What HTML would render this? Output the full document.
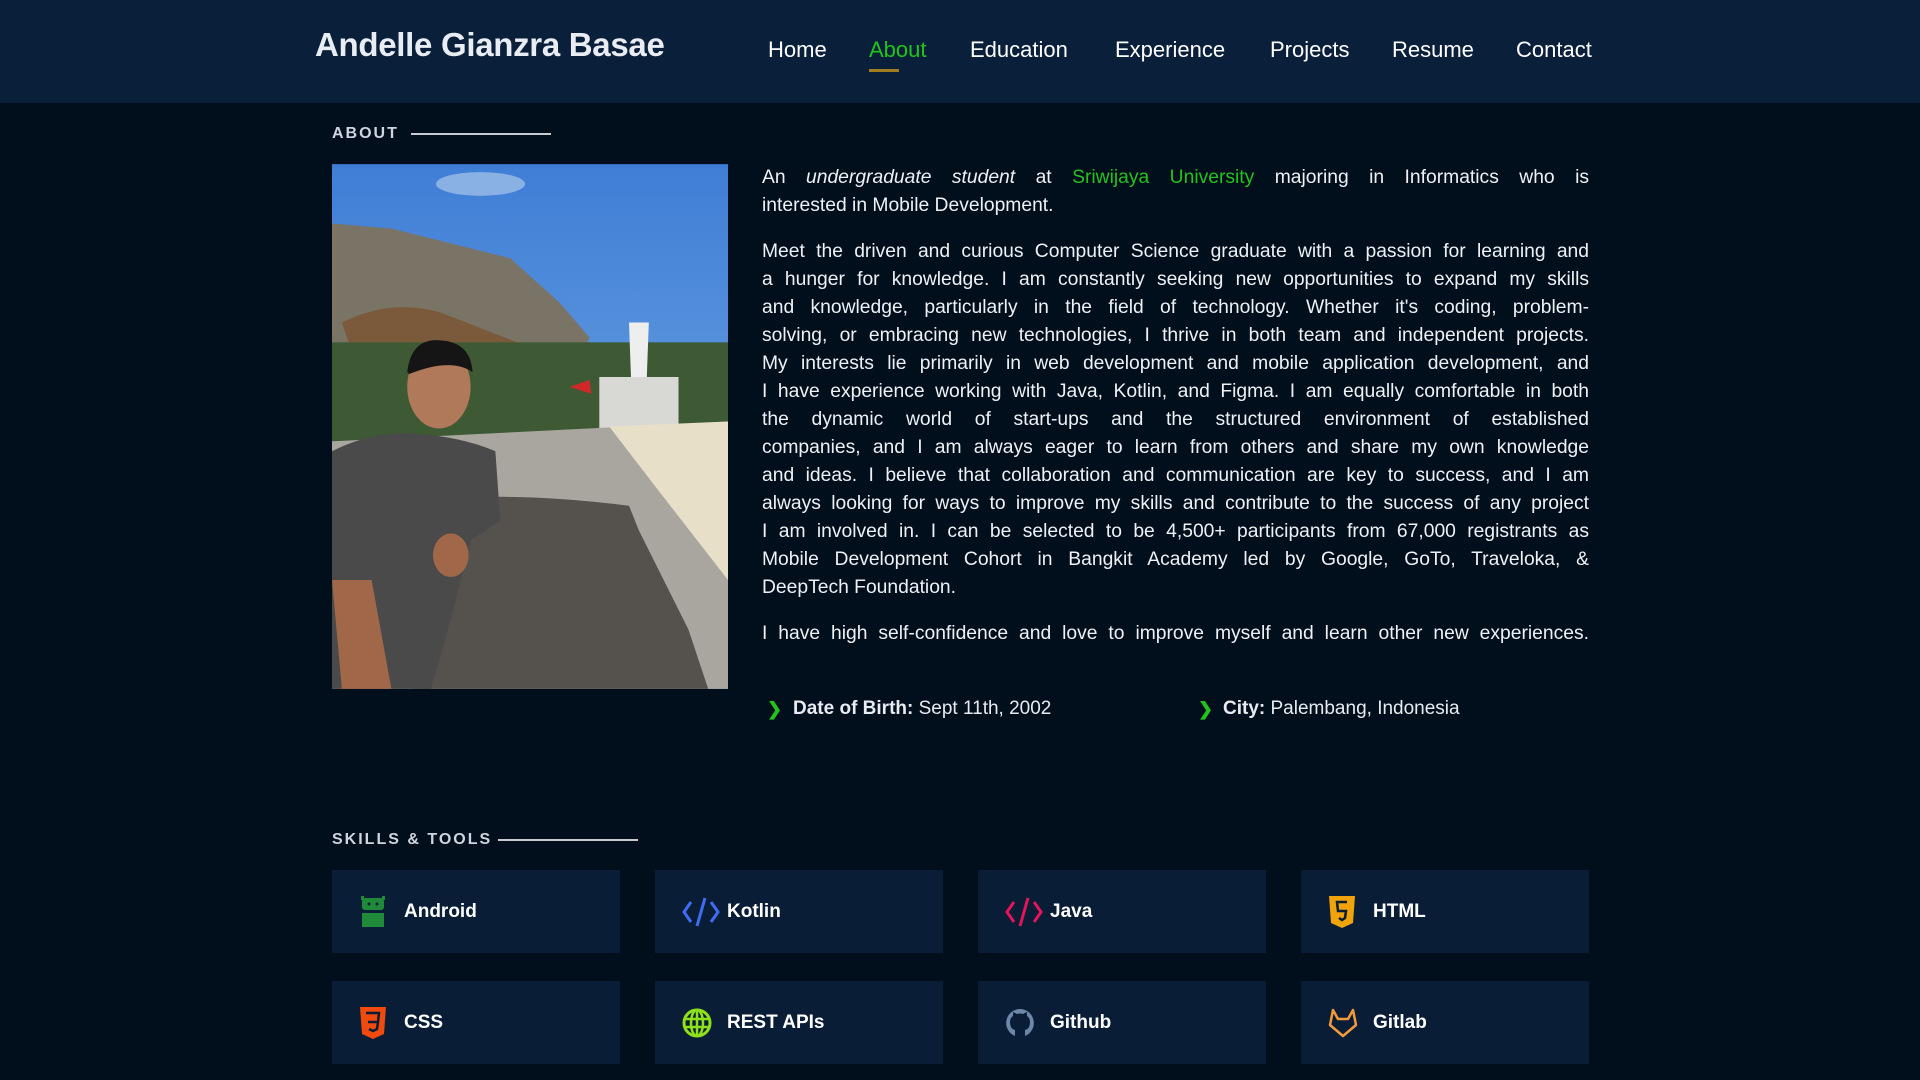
<!DOCTYPE html>
<html><head><meta charset="utf-8"><style>
*{margin:0;padding:0;box-sizing:border-box}
body{width:1920px;height:1080px;background:#010e1b;font-family:"Liberation Sans",sans-serif;color:#e8ecf2;position:relative;overflow:hidden}
.hdr{position:absolute;left:0;top:0;width:1920px;height:103px;background:#0a1f3a}
.name{position:absolute;left:315px;top:26px;font-size:33px;font-weight:bold;color:#e9edf3;letter-spacing:-0.3px}
.nav a{position:absolute;top:37px;font-size:22px;color:#fff;text-decoration:none}
.ul{position:absolute;left:869px;top:69px;width:30px;height:3px;background:#a07d20}
.lbl{position:absolute;font-size:16px;font-weight:bold;letter-spacing:2px;color:#cfd5de}
.line{position:absolute;height:2px;background:#c8ccd2}
.photo{position:absolute;left:332px;top:163px;width:396px;height:527px;overflow:hidden}
.txt{position:absolute;left:762px;width:827px;font-size:19.3px;line-height:28px;color:#eef1f5}
.txt div{text-align:justify;text-align-last:justify;white-space:nowrap}
.txt div.l{text-align-last:left}
.g{color:#22c21f}
.info{position:absolute;top:698px;font-size:19px}
.info b{font-weight:bold}
.chev{position:absolute;top:699px;color:#22c21f;font-weight:bold;font-size:18px}
.card{position:absolute;width:288px;height:83px;background:#0a1d37}
.card span{position:absolute;left:72px;top:31px;font-size:19px;font-weight:bold;color:#fff}
.card svg{position:absolute;left:26px;top:26px}
</style></head><body>
<div class="hdr">
<div class="name">Andelle Gianzra Basae</div>
<div class="nav">
<a style="left:768px">Home</a>
<a style="left:869px;color:#1fc41c">About</a>
<a style="left:970px">Education</a>
<a style="left:1115px">Experience</a>
<a style="left:1270px">Projects</a>
<a style="left:1392px">Resume</a>
<a style="left:1516px">Contact</a>
</div>
<div class="ul"></div>
</div>

<div class="lbl" style="left:332px;top:125px">ABOUT</div>
<div class="line" style="left:411px;top:133px;width:140px"></div>

<div class="photo">
<svg width="396" height="527" viewBox="0 0 400 530">
<defs><linearGradient id="sky" x1="0" y1="0" x2="0" y2="1"><stop offset="0" stop-color="#3f7ed6"/><stop offset="1" stop-color="#7fb2e6"/></linearGradient></defs>
<rect width="400" height="530" fill="url(#sky)"/>
<ellipse cx="150" cy="20" rx="45" ry="12" fill="#a9c6ea" opacity=".7"/>
<path d="M0 60 L60 65 L180 95 L230 140 L260 175 L250 200 L0 200Z" fill="#7a7466"/>
<path d="M300 185 L380 190 L390 215 L300 215Z" fill="#8c8a80"/>
<path d="M10 160 Q60 135 110 150 L200 185 L20 190Z" fill="#7a5a3a"/>
<rect x="0" y="180" width="400" height="100" fill="#3e5a34"/>
<rect x="270" y="215" width="80" height="60" fill="#d8d8d4"/>
<path d="M300 160 L320 160 L318 215 L302 215Z" fill="#eee"/>
<path d="M240 225 L260 218 L262 232Z" fill="#d02828"/>
<path d="M0 280 L400 260 L400 530 L0 530Z" fill="#a9a6a0"/>
<path d="M280 265 L400 260 L400 420 L330 330Z" fill="#e8dfc8"/>
<path d="M100 340 Q180 330 300 345 L310 370 L360 470 L380 530 L80 530 Z" fill="#55524e"/>
<path d="M0 290 Q40 270 80 272 Q130 275 165 290 L170 360 L140 380 L120 460 L100 530 L0 530Z" fill="#4a4a4a"/>
<ellipse cx="108" cy="225" rx="32" ry="42" fill="#b07a5a"/>
<path d="M76 210 Q80 175 110 178 Q140 180 142 210 Q120 195 78 212Z" fill="#151515"/>
<path d="M0 420 L10 530 L60 530 L40 420Z" fill="#a06848"/>
<ellipse cx="120" cy="395" rx="18" ry="22" fill="#a06848"/>
</svg>
</div>

<div class="txt" style="top:164px">
<div>An <i>undergraduate student</i> at <span class="g">Sriwijaya University</span> majoring in Informatics who is</div>
<div class="l">interested in Mobile Development.</div>
</div>
<div class="txt" style="top:238px">
<div>Meet the driven and curious Computer Science graduate with a passion for learning and</div>
<div>a hunger for knowledge. I am constantly seeking new opportunities to expand my skills</div>
<div>and knowledge, particularly in the field of technology. Whether it's coding, problem-</div>
<div>solving, or embracing new technologies, I thrive in both team and independent projects.</div>
<div>My interests lie primarily in web development and mobile application development, and</div>
<div>I have experience working with Java, Kotlin, and Figma. I am equally comfortable in both</div>
<div>the dynamic world of start-ups and the structured environment of established</div>
<div>companies, and I am always eager to learn from others and share my own knowledge</div>
<div>and ideas. I believe that collaboration and communication are key to success, and I am</div>
<div>always looking for ways to improve my skills and contribute to the success of any project</div>
<div>I am involved in. I can be selected to be 4,500+ participants from 67,000 registrants as</div>
<div>Mobile Development Cohort in Bangkit Academy led by Google, GoTo, Traveloka, &amp;</div>
<div class="l">DeepTech Foundation.</div>
</div>
<div class="txt" style="top:620px">
<div>I have high self-confidence and love to improve myself and learn other new experiences.</div>
</div>

<div class="chev" style="left:767px">&#x276F;</div>
<div class="info" style="left:793px"><b>Date of Birth:</b> Sept 11th, 2002</div>
<div class="chev" style="left:1198px">&#x276F;</div>
<div class="info" style="left:1223px"><b>City:</b> Palembang, Indonesia</div>

<div class="lbl" style="left:332px;top:831px">SKILLS &amp; TOOLS</div>
<div class="line" style="left:498px;top:839px;width:140px"></div>

<div class="card" style="left:332px;top:870px"><svg width="30" height="32" viewBox="0 0 30 32"><rect x="4" y="2" width="22" height="12" rx="3" fill="#1f8a3a"/><rect x="3" y="0" width="3" height="4" fill="#1f8a3a"/><rect x="24" y="0" width="3" height="4" fill="#1f8a3a"/><rect x="4" y="17" width="22" height="14" fill="#1f8a3a"/><circle cx="11" cy="8" r="1.5" fill="#0a1d37"/><circle cx="19" cy="8" r="1.5" fill="#0a1d37"/></svg><span>Android</span></div>
<div class="card" style="left:655px;top:870px"><svg width="40" height="32" viewBox="0 0 40 32"><path d="M10 6 L3 16 L10 26 M30 6 L37 16 L30 26 M24 2 L16 30" stroke="#3d6df2" stroke-width="3" fill="none"/></svg><span>Kotlin</span></div>
<div class="card" style="left:978px;top:870px"><svg width="40" height="32" viewBox="0 0 40 32"><path d="M10 6 L3 16 L10 26 M30 6 L37 16 L30 26 M24 2 L16 30" stroke="#e3155a" stroke-width="3" fill="none"/></svg><span>Java</span></div>
<div class="card" style="left:1301px;top:870px"><svg width="30" height="32" viewBox="0 0 30 32"><path d="M2 0 H28 L26 27 L15 32 L4 27Z" fill="#f0a30a"/><path d="M20 6 H10 L11 15 H19 L18 22 L15 24 L12 22" stroke="#0a1d37" stroke-width="2.5" fill="none"/></svg><span>HTML</span></div>

<div class="card" style="left:332px;top:981px"><svg width="30" height="32" viewBox="0 0 30 32"><path d="M2 0 H28 L26 27 L15 32 L4 27Z" fill="#f04a0e"/><path d="M8 6 H21 L20 15 H10 M20 15 L19 22 L15 24 L11 22" stroke="#0a1d37" stroke-width="2.5" fill="none"/></svg><span>CSS</span></div>
<div class="card" style="left:655px;top:981px"><svg width="32" height="32" viewBox="0 0 32 32"><circle cx="16" cy="16" r="13" stroke="#8ee01a" stroke-width="3" fill="none"/><ellipse cx="16" cy="16" rx="6" ry="13" stroke="#8ee01a" stroke-width="2.5" fill="none"/><path d="M3 12 H29 M3 20 H29 M16 3 V29" stroke="#8ee01a" stroke-width="2.5"/></svg><span>REST APIs</span></div>
<div class="card" style="left:978px;top:981px"><svg width="32" height="32" viewBox="0 0 32 32"><path d="M16 2 A14 14 0 0 0 11 29 V23 Q6 22 6 15 Q6 11 9 9 L9 5 L13 7 Q16 6 19 7 L23 5 L23 9 Q26 11 26 15 Q26 22 21 23 V29 A14 14 0 0 0 16 2Z" fill="#6d87a8"/></svg><span>Github</span></div>
<div class="card" style="left:1301px;top:981px"><svg width="32" height="32" viewBox="0 0 32 32"><path d="M16 29 L3 18 L6 3 L11 12 H21 L26 3 L29 18Z" stroke="#f29a3a" stroke-width="2.5" fill="none" stroke-linejoin="round"/></svg><span>Gitlab</span></div>
</body></html>
